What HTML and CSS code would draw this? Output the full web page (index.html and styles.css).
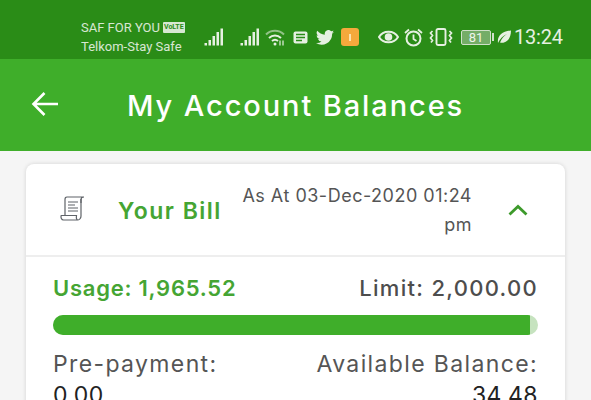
FILE: index.html
```html
<!DOCTYPE html>
<html lang="en">
<head>
<meta charset="utf-8">
<title>My Account Balances</title>
<link rel="stylesheet" href="styles.css">
</head>
<body>
<div class="screen">
  <div class="status">
    <div class="carrier">
      <div class="carrier-top">SAF FOR YOU <span class="volte">VoLTE</span></div>
      <div>Telkom-Stay Safe</div>
    </div>
    <svg class="ic sig1" width="20" height="18" viewBox="0 0 20 18"><path d="M0.500 15h2.500v2.500H0.500zM4.500 12H7v5.500H4.500zM8.500 8H11v9.500H8.500zM12.500 4H15v13.500h-2.500zM16.500 .5H19v17h-2.500z" fill="#e6f0e2"/></svg>
    <svg class="ic sig2" width="20" height="18" viewBox="0 0 20 18"><path d="M0.500 15h2.500v2.500H0.500zM4.500 12H7v5.500H4.500zM8.500 8H11v9.500H8.500zM12.500 4H15v13.500h-2.500zM16.500 .5H19v17h-2.500z" fill="#e6f0e2"/></svg>
    <svg class="ic wifi" width="20" height="18" viewBox="0 0 20 18"><g fill="none" stroke="#e6f0e2" stroke-width="2"><path d="M1 6.500c5-5 13-5 18 0" opacity=".55"/><path d="M4 10c3.500-3.300 8.500-3.300 12 0"/><path d="M7 13c2-1.700 4-1.700 6 0"/></g><circle cx="10" cy="16" r="1.500" fill="#e6f0e2"/><path d="M15 12.500v5M18 12.500v5" stroke="#e6f0e2" stroke-width="1.200"/></svg>
    <svg class="ic news" width="15" height="13" viewBox="0 0 15 13"><rect x="0.500" y="0.500" width="14" height="12" rx="2" fill="#e6f0e2"/><path d="M3 3.500h9M3 6.500h9M3 9.500h6" stroke="#2a8c17" stroke-width="1.400"/></svg>
    <svg class="ic bird" width="18" height="15" viewBox="0 0 24 20"><path d="M24 2.400a10 10 0 0 1-2.800.8A5 5 0 0 0 23.300.500a10 10 0 0 1-3.100 1.200 4.900 4.900 0 0 0-8.400 4.500A14 14 0 0 1 1.700 1a4.900 4.900 0 0 0 1.500 6.600 4.900 4.900 0 0 1-2.200-.6 4.900 4.900 0 0 0 3.900 4.900 5 5 0 0 1-2.200.1 4.900 4.900 0 0 0 4.600 3.400A9.900 9.900 0 0 1 0 17.400 14 14 0 0 0 21.500 5a10 10 0 0 0 2.500-2.600z" fill="#e6f0e2"/></svg>
    <span class="app-badge"><span class="app-dot"></span></span>
    <svg class="ic eye" width="21" height="16" viewBox="0 0 21 16"><path d="M1 8C5 1 16 1 20 8 16 15 5 15 1 8z" fill="none" stroke="#e6f0e2" stroke-width="2"/><circle cx="10.500" cy="8" r="3.800" fill="#e6f0e2"/></svg>
    <svg class="ic alarm" width="19" height="19" viewBox="0 0 19 19"><circle cx="9.500" cy="10.500" r="7" fill="none" stroke="#e6f0e2" stroke-width="2"/><path d="M9.500 6.500v4.500l3 2M1 5l4-3.500M18 5l-4-3.500" fill="none" stroke="#e6f0e2" stroke-width="1.800"/></svg>
    <svg class="ic vibrate" width="24" height="18" viewBox="0 0 24 18"><rect x="7.500" y="1" width="9" height="16" rx="1.500" fill="none" stroke="#e6f0e2" stroke-width="1.900"/><path d="M3.500 3l-2 2 2 2.500-2 2.500 2 2.500-1.500 2M20.500 3l2 2-2 2.500 2 2.500-2 2.500 1.500 2" fill="none" stroke="#e6f0e2" stroke-width="1.700"/></svg>
    <div class="battery"><span class="batt-body">81</span><span class="batt-tip"></span></div>
    <svg class="ic leaf" width="14" height="14" viewBox="0 0 14 14"><path d="M1 13C0 6 5 1 14 .5 14 9 9 14 3 12.500 5 8 7 6 10 4 6 5.500 3 8.500 1 13z" fill="#e6f0e2"/></svg>
    <span class="clock">13:24</span>
  </div>

  <header class="appbar">
    <svg class="back" width="28" height="26" viewBox="0 0 28 26"><path d="M13.500 2 2.500 13l11 11M3 13h24" fill="none" stroke="#fff" stroke-width="2.600"/></svg>
    <h1 class="title">My Account Balances</h1>
  </header>

  <main class="content">
    <section class="card">
      <div class="card-head">
        <svg class="bill-icon" width="25" height="26" viewBox="0 0 25 26"><g fill="none" stroke="#5f6368" stroke-width="1.200"><path d="M21 7V3.500C21 2 22 1 24 1H7C5.500 1 5 2 5 3.500V19"/><path d="M5 19.500H1.200C.5 21.500 1.500 24 3.500 24H18c-1.200 0-2-1.500-1.500-4.500H5"/><path d="M21 3v17c0 2-1.500 4-3 4"/><path d="M8 6h10M8 9h7M8 12h10M8 15h10"/></g></svg>
        <div class="bill-label">Your Bill</div>
        <div class="as-at">As At 03-Dec-2020 01:24<br>pm</div>
        <svg class="chev" width="20" height="12" viewBox="0 0 20 12"><path d="M1.500 10.500 10 2.500l8.500 8" fill="none" stroke="#3d9a2b" stroke-width="2.800"/></svg>
      </div>
      <div class="card-body">
        <div class="row big">
          <span class="usage">Usage: 1,965.52</span>
          <span class="limit">Limit: 2,000.00</span>
        </div>
        <div class="track"><div class="fill" style="width:98.300%"></div></div>
        <div class="row info">
          <span>Pre-payment:</span>
          <span>Available Balance:</span>
        </div>
        <div class="row info values">
          <span>0.00</span>
          <span>34.48</span>
        </div>
      </div>
    </section>
  </main>
</div>
</body>
</html>
```

FILE: styles.css
```css
* { box-sizing: border-box; }
html, body { margin: 0; padding: 0; }
body { width: 591px; height: 400px; overflow: hidden; background: #f5f5f5; font-family: "Inter", "Liberation Sans", sans-serif; }
.screen { width: 591px; height: 400px; overflow: hidden; }

.status { height: 59px; background: #2a8c17; color: #e6f0e2; display: flex; align-items: center; padding: 15px 0 0 81px; font-family: "Roboto", sans-serif; }
.carrier { width: 123px; font-size: 13px; line-height: 19px; flex: none; white-space: nowrap; opacity: .92; }
.carrier-top { display: flex; align-items: center; gap: 3px; }
.volte { font-size: 7px; font-weight: 700; background: #e6f0e2; color: #2a8c17; padding: 0 1px; line-height: 11px; border-radius: 1px; }
.ic { flex: none; display: block; }
.sig2 { margin-left: 16px; }
.wifi { margin-left: 5px; }
.news { margin-left: 8px; }
.bird { margin-left: 8px; }
.app-badge { flex: none; width: 18px; height: 18px; margin-left: 7px; border-radius: 3px; background: #f5a93c; display: flex; align-items: center; justify-content: center; }
.app-dot { width: 2px; height: 7px; background: #fde3ae; }
.eye { margin-left: 19px; }
.alarm { margin-left: 5px; }
.vibrate { margin-left: 6px; }
.battery { flex: none; display: flex; align-items: center; margin-left: 8px; }
.batt-body { width: 30px; height: 15px; border: 1px solid #cfe0c9; background: #74ad67; border-radius: 2px; font-size: 13px; line-height: 13px; text-align: center; color: #eef5eb; }
.batt-tip { width: 2px; height: 8px; background: #cfe0c9; margin-left: 1px; }
.leaf { margin-left: 3px; }
.clock { font-size: 20px; margin-left: 3px; letter-spacing: -.2px; white-space: nowrap; color: #e6f0e2; }

.appbar { height: 92px; background: #3fae2a; display: flex; align-items: center; padding: 0 0 2px 31px; }
.back { flex: none; }
.title { margin: 3px 0 0 68px; color: #fff; font-size: 29px; font-weight: 500; letter-spacing: 1.9px; white-space: nowrap; }

.content { padding: 13px 26px 0; }
.card { background: #fff; border-radius: 8px; box-shadow: 0 0 4px rgba(0, 0, 0, .14); }
.card-head { height: 93px; display: flex; align-items: center; border-bottom: 2px solid #eeeeee; padding: 0 37px 0 34px; }
.bill-icon { flex: none; margin-top: -2px; }
.bill-label { margin: 2px 0 0 33px; color: #45a533; font-size: 23px; font-weight: 600; letter-spacing: 1.5px; white-space: nowrap; }
.as-at { margin-left: auto; width: 235px; text-align: right; color: #555; font-size: 18px; line-height: 29px; letter-spacing: .5px; white-space: nowrap; }
.chev { flex: none; margin-left: 36px; }

.card-body { padding: 17px 27px 0; }
.row { display: flex; justify-content: space-between; white-space: nowrap; }
.big { font-size: 22px; font-weight: 600; line-height: 29px; letter-spacing: .75px; }
.usage { color: #45a533; }
.limit { color: #4d4d4d; font-weight: 500; letter-spacing: 1.3px; }
.track { height: 20px; margin-top: 12px; border-radius: 10px; background: #c6e3bf; overflow: hidden; }
.fill { height: 100%; background: #3fae2a; }
.info { color: #555; font-size: 23px; line-height: 30px; letter-spacing: 1.37px; margin-top: 14px; }
.values { margin-top: 1px; color: #222; letter-spacing: .4px; }
```
